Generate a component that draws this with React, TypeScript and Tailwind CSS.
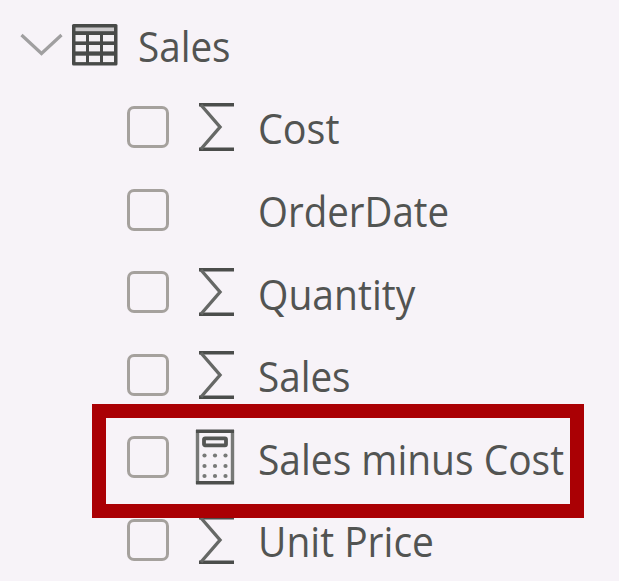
type FieldIcon = "sum" | "none" | "calc";

const fields: { label: string; icon: FieldIcon; stretch: string; highlighted?: boolean }[] = [
  { label: "Cost", icon: "sum", stretch: "scale-x-[0.94]" },
  { label: "OrderDate", icon: "none", stretch: "scale-x-[0.916]" },
  { label: "Quantity", icon: "sum", stretch: "scale-x-[0.93]" },
  { label: "Sales", icon: "sum", stretch: "scale-x-[0.92]" },
  { label: "Sales minus Cost", icon: "calc", stretch: "scale-x-[0.927]", highlighted: true },
  { label: "Unit Price", icon: "sum", stretch: "scale-x-[0.928]" },
];

function Chevron() {
  return (
    <svg className="ml-[20px] h-[24px] w-[43px] shrink-0" viewBox="0 0 43 24" fill="none" stroke="#a09fa0" strokeWidth="3.2">
      <path d="M1.5 2 L21.5 20.5 L41.5 2" />
    </svg>
  );
}

function TableIcon() {
  return (
    <svg className="ml-[8px] h-[44px] w-[48px] shrink-0" viewBox="0 0 48 44">
      <rect x="1" y="1" width="45.5" height="41.5" rx="1.5" fill="#484a48" />
      <rect x="4.5" y="4.5" width="38.5" height="3.7" fill="#cbc9cb" />
      {[12, 22, 32.7].map((y) =>
        [4.5, 18, 32].map((x) => (
          <rect key={`${x}-${y}`} x={x} y={y} width={x === 4.5 ? 10.5 : 11} height="6.4" fill="#f3f0f3" />
        ))
      )}
    </svg>
  );
}

function SumIcon() {
  return (
    <svg className="h-[50px] w-[40px]" viewBox="0 0 40 50" fill="none" stroke="#4b4d4b">
      <path d="M4 2.7 H39 M4 47.3 H39" strokeWidth="3.6" />
      <path d="M6 3 L25 25 L6 47" strokeWidth="3.4" stroke="#666866" />
    </svg>
  );
}

function CalculatorIcon() {
  return (
    <svg className="h-[56px] w-[40px]" viewBox="0 0 40 56" fill="none">
      <path d="M2.5 1 V55 M37.5 1 V55" stroke="#777977" strokeWidth="3.4" />
      <path d="M1 2.2 H39 M1 53.8 H39" stroke="#4d4f4d" strokeWidth="3.6" />
      <rect x="9" y="9.3" width="22" height="7" rx="1" stroke="#555755" strokeWidth="3.8" />
      {[26.5, 37, 47].map((y) =>
        [9.5, 20, 30.5].map((x) => <circle key={`${x}-${y}`} cx={x} cy={y} r="2.1" fill="#777977" />)
      )}
    </svg>
  );
}

export default function App() {
  return (
    <main className="h-[581px] w-[619px] overflow-hidden bg-[#f7f3f8] pt-[4px] font-['Open_Sans','Noto_Sans',sans-serif] text-[42px] text-[#525452]">
      <header className="flex h-[81.7px] items-center">
        <Chevron />
        <TableIcon />
        <span className="ml-[19px] origin-left scale-x-[0.92] pt-[3px] leading-none whitespace-nowrap">Sales</span>
      </header>
      <ul>
        {fields.map((field) => (
          <li key={field.label} className="relative flex h-[82.6px] items-center pl-[127px]">
            <span className="size-[42px] shrink-0 rounded-[7px] border-[3px] border-[#a5a19d]" />
            <span className="ml-[26px] flex w-[40px] shrink-0 justify-center">
              {field.icon === "sum" && <SumIcon />}
              {field.icon === "calc" && <CalculatorIcon />}
            </span>
            <span className={`ml-[23px] origin-left pt-[3px] leading-none whitespace-nowrap ${field.stretch}`}>{field.label}</span>
            {field.highlighted && (
              <span className="absolute top-[-12.1px] left-[92px] z-10 h-[114px] w-[492px] border-[14px] border-[#aa0004]" />
            )}
          </li>
        ))}
      </ul>
    </main>
  );
}
